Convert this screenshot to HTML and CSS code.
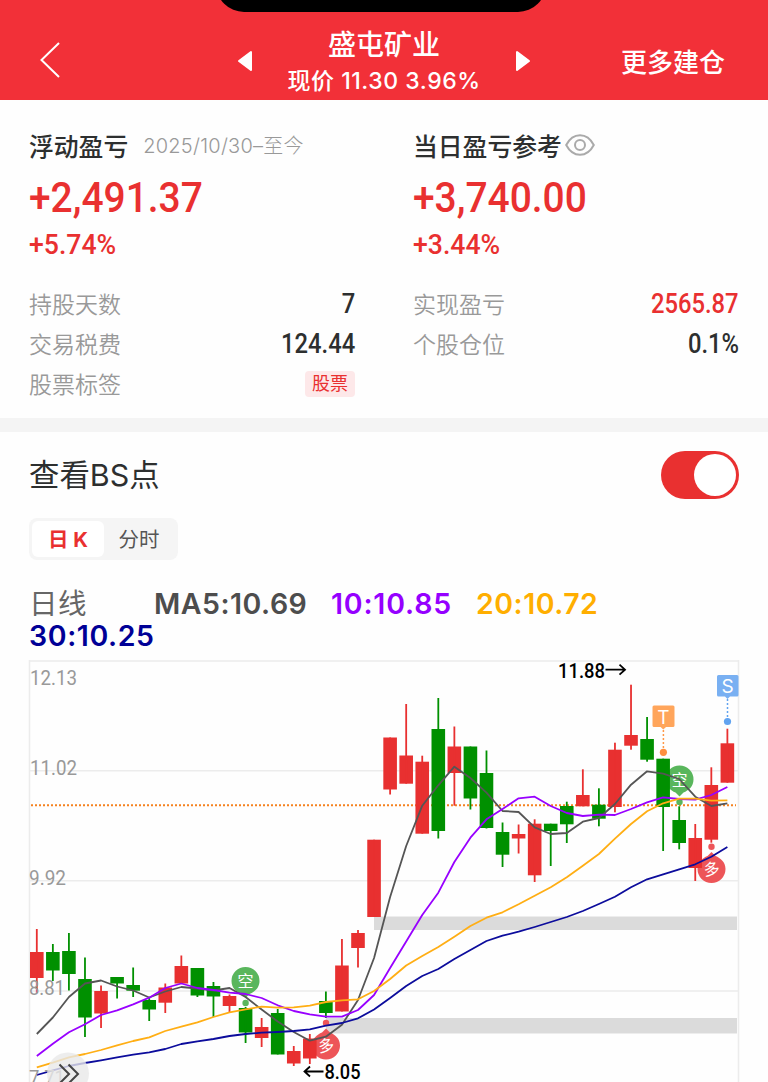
FILE: index.html
```html
<!DOCTYPE html>
<html lang="zh-CN">
<head>
    <meta charset="UTF-8">
    <meta name="viewport" content="width=device-width, initial-scale=1.0">
    <title>盛屯矿业</title>
    <link rel="stylesheet" href="styles.css">
</head>
<body>
<header class="header">
    <div class="notch"></div>
    <svg class="back" width="24" height="38" viewBox="0 0 24 38"><path d="M21 2 3.500 19 21 36"/></svg>
    <div class="stock">
        <svg class="arrow" width="16" height="22" viewBox="0 0 16 22"><path d="M14 3v18L2 12z"/></svg>
        <div class="stock-info">
            <div class="stock-name">盛屯矿业</div>
            <div class="stock-price">现价 11.30 3.96%</div>
        </div>
        <svg class="arrow" width="16" height="22" viewBox="0 0 16 22"><path d="M2 3v18l12-9z"/></svg>
    </div>
    <div class="more">更多建仓</div>
</header>

<section class="summary">
    <div class="column">
        <div class="title">浮动盈亏<span class="date">2025/10/30–至今</span></div>
        <div class="amount"><span>+2,491.37</span></div>
        <div class="percent"><span>+5.74%</span></div>
        <div class="row first"><span>持股天数</span><b>7</b></div>
        <div class="row"><span>交易税费</span><b>124.44</b></div>
        <div class="row"><span>股票标签</span><em class="tag">股票</em></div>
    </div>
    <div class="column">
        <div class="title">当日盈亏参考<svg class="eye" width="30" height="22" viewBox="0 0 30 22"><path d="M1.200 11C8-2 22-2 28.800 11 22 24 8 24 1.200 11z"/><circle cx="15" cy="11" r="5"/></svg></div>
        <div class="amount"><span>+3,740.00</span></div>
        <div class="percent"><span>+3.44%</span></div>
        <div class="row first"><span>实现盈亏</span><b class="red">2565.87</b></div>
        <div class="row"><span>个股仓位</span><b>0.1%</b></div>
    </div>
</section>

<section class="points">
    <div class="points-head">
        <h2>查看BS点</h2>
        <div class="switch"></div>
    </div>
    <div class="tabs">
        <div class="tab active">日 K</div>
        <div class="tab">分时</div>
    </div>
    <div class="legend">
        <span class="period">日线</span>
        <span class="ma5">MA5:10.69</span>
        <span class="ma10">10:10.85</span>
        <span class="ma20">20:10.72</span>
        <span class="ma30">30:10.25</span>
    </div>
</section>

<svg class="chart" width="768" height="428" viewBox="0 654 768 428">
    <path class="grid" d="M29 661H739M29 770.7H739M29 880.7H739M29 991H739M29.5 660V1082M738.5 660V1082"/>
    <path class="gap" d="M374 916.5H737V930H374zM326 1018H737V1033.5H326z"/>
    <path class="price-line" d="M31 805.3H736"/>

    <g class="short">
        <path d="M231.5 981a14 14 0 1 1 28 0c0 7-5 11-10 13l-4 4-4-4c-5-2-10-6-10-13z"/>
        <circle cx="245.6" cy="1003" r="3.2"/>
        <text x="245.6" y="987">空</text>
        <path d="M665.5 779.5a14 14 0 1 1 28 0c0 7-5 11-10 13l-4 4-4-4c-5-2-10-6-10-13z"/>
        <circle cx="679.5" cy="802" r="3.2"/>
        <text x="679.5" y="785.5">空</text>
    </g>
    <g class="long">
        <path d="M312 1045.5a14 14 0 1 0 28 0c0-7-5-11-10-13l-4-4-4 4c-5 2-10 6-10 13z"/>
        <circle cx="326" cy="1023" r="3.2"/>
        <text x="326" y="1051.5" transform="rotate(-8 326 1045)">多</text>
        <path d="M697.5 869a14 14 0 1 0 28 0c0-7-5-11-10-13l-4-4-4 4c-5 2-10 6-10 13z"/>
        <circle cx="711.5" cy="846.7" r="3.2"/>
        <text x="711.5" y="875" transform="rotate(-8 711.5 869)">多</text>
    </g>

    <g id="candles"></g>
    <g id="lines"></g>

    <g class="badge t">
        <path d="M654 705.5h19a1.500 1.500 0 0 1 1.500 1.500v18.500a1.500 1.500 0 0 1-1.500 1.500h-7l-2.700 2.500-2.700-2.500h-6.600a1.500 1.500 0 0 1-1.500-1.500V707a1.500 1.500 0 0 1 1.500-1.500z"/>
        <path class="stem" d="M663.4 730V749"/>
        <circle cx="663.4" cy="752.3" r="3.6"/>
        <text x="663.4" y="723.5">T</text>
    </g>
    <g class="badge s">
        <path d="M718.5 675h18.500a1.500 1.500 0 0 1 1.500 1.500v18.500a1.500 1.500 0 0 1-1.500 1.500h-7l-2.500 2.500-2.500-2.500h-6.500a1.500 1.500 0 0 1-1.500-1.500v-18.500a1.500 1.500 0 0 1 1.500-1.500z"/>
        <path class="stem" d="M727.5 699V718"/>
        <circle cx="727.5" cy="721.5" r="3.6"/>
        <text x="727.5" y="693">S</text>
    </g>

    <g class="axis">
        <text x="30" y="685" textLength="47" lengthAdjust="spacingAndGlyphs">12.13</text>
        <text x="30" y="775" textLength="47" lengthAdjust="spacingAndGlyphs">11.02</text>
        <text x="29" y="885" textLength="37" lengthAdjust="spacingAndGlyphs">9.92</text>
        <text x="29" y="995" textLength="36" lengthAdjust="spacingAndGlyphs">8.81</text>
        <text x="29" y="1085" textLength="36" lengthAdjust="spacingAndGlyphs">7.71</text>
    </g>
    <g class="extreme">
        <text x="558" y="677.5" textLength="47" lengthAdjust="spacingAndGlyphs">11.88</text>
        <path d="M605.5 669.7H625M619.5 664.7l5.500 5-5.500 5"/>
        <text x="324.5" y="1078.5" textLength="36" lengthAdjust="spacingAndGlyphs">8.05</text>
        <path d="M323.5 1071.5H305M310 1066.5l-5.500 5 5.500 5"/>
    </g>

    <circle class="expand" cx="68" cy="1073.5" r="21"/>
    <path class="expand-icon" d="M59.5 1064.5l9.500 9.500-9.500 9.500M68.5 1064.5l9.500 9.500-9.500 9.500"/>
</svg>
<script src="chart.js"></script>
</body>
</html>
```

FILE: styles.css
```css
* {
    box-sizing: border-box;
}

body {
    margin: 0;
    height: 1082px;
    overflow: hidden;
    background: #fefefe;
    color: #2d2f2f;
    font-family: Inter, "Noto Sans CJK SC", sans-serif;
}

.header {
    position: relative;
    display: grid;
    grid-template-columns: 200px 368px 200px;
    align-items: center;
    height: 100px;
    padding-top: 20px;
    background: #f23038;
    color: #fff;
}

.notch {
    position: absolute;
    top: -20px;
    left: 216px;
    width: 330px;
    height: 32px;
    border-radius: 0 0 28px 28px;
    background: #000;
}

.back {
    margin-left: 38px;
    fill: none;
    stroke: #fff;
    stroke-width: 2;
}

.stock {
    display: flex;
    align-items: center;
    justify-content: space-between;
    padding: 0 37px;
}

.arrow {
    fill: #fff;
    stroke: #fff;
    stroke-width: 2;
    stroke-linejoin: round;
}

.stock-info {
    padding-top: 5px;
    text-align: center;
    white-space: nowrap;
}

.stock-name {
    font-size: 28px;
    font-weight: 500;
    line-height: 38px;
}

.stock-price {
    font-size: 23px;
    font-weight: 500;
    letter-spacing: 0.55px;
    line-height: 35px;
}

.more {
    padding: 5px 0 0 53px;
    font-size: 26px;
    font-weight: 500;
    line-height: 40px;
}

.summary {
    display: flex;
    gap: 58px;
    height: 332px;
    padding: 27px 29px 0;
    border-bottom: 14px solid #f4f4f4;
}

.column {
    flex: 1;
}

.title {
    display: flex;
    align-items: center;
    height: 36px;
    font-size: 24.8px;
    font-weight: 500;
}

.date {
    margin: -2px 0 0 15px;
    color: #999;
    font-size: 20px;
    font-weight: 300;
    letter-spacing: 0.25px;
}

.eye {
    margin-left: 3px;
    fill: none;
    stroke: #aaa;
    stroke-width: 2;
}

.amount,
.percent {
    color: #e93030;
    font-family: Roboto, sans-serif;
    font-weight: 500;
}

.amount {
    height: 68px;
    font-size: 43px;
    line-height: 68px;
}

.percent {
    height: 25px;
    font-size: 28px;
    line-height: 27px;
}

.amount span,
.percent span {
    display: inline-block;
    transform: scaleX(0.905);
    transform-origin: left;
}

.percent span {
    transform: scaleX(0.95);
}

.row {
    display: flex;
    align-items: center;
    justify-content: space-between;
    height: 40px;
    color: #999;
    font-size: 23px;
    font-weight: 350;
}

.row.first {
    margin-top: 27px;
}

.row b {
    padding-top: 2px;
    color: #2d2f2f;
    font-family: Roboto, sans-serif;
    font-size: 27px;
    font-weight: 500;
    transform: scaleX(0.88);
    transform-origin: right;
}

.row b.red {
    color: #e93030;
}

.tag {
    width: 50px;
    height: 26px;
    margin-top: 2px;
    border-radius: 4px;
    background: #fde8e9;
    color: #e93030;
    font-size: 18px;
    font-style: normal;
    font-weight: 400;
    line-height: 26px;
    text-align: center;
}

.points {
    height: 222px;
    padding: 17px 29px 0;
}

.points-head {
    display: flex;
    align-items: center;
    justify-content: space-between;
    height: 52px;
}

h2 {
    margin: -4px 0 0;
    font-size: 30.4px;
    font-weight: 400;
}

.switch {
    width: 78px;
    height: 48px;
    padding: 3px;
    border-radius: 24px;
    background: #e93030;
}

.switch::after {
    content: "";
    display: block;
    width: 42px;
    height: 42px;
    margin-left: auto;
    border-radius: 50%;
    background: #fff;
}

.tabs {
    display: flex;
    width: 149px;
    height: 42px;
    margin-top: 17px;
    padding: 3px;
    border-radius: 8px;
    background: #f5f5f5;
}

.tab {
    width: 70px;
    border-radius: 6px;
    color: #555;
    font-size: 20.5px;
    line-height: 37px;
    text-align: center;
}

.tab.active {
    width: 72px;
    background: #fff;
    color: #e93030;
    font-weight: 700;
}

.legend {
    display: flex;
    flex-wrap: wrap;
    align-items: center;
    margin-top: 28px;
    font-size: 28.5px;
    font-weight: 600;
    letter-spacing: 0.5px;
    line-height: 32px;
}

.period {
    width: 125px;
    color: #666;
    font-weight: 400;
}

.ma5 {
    width: 177px;
    color: #4d4d4d;
}

.ma10 {
    width: 145px;
    color: #9500ff;
    letter-spacing: 0.8px;
}

.ma20 {
    width: 200px;
    color: #ffae00;
}

.ma30 {
    color: #000096;
    letter-spacing: 0.6px;
}

.chart {
    display: block;
}

.grid {
    fill: none;
    stroke: #ececec;
    stroke-width: 1.5;
}

.gap {
    fill: #dbdbdb;
}

.price-line {
    fill: none;
    stroke: #f58220;
    stroke-width: 2;
    stroke-dasharray: 2 2;
}

.up {
    fill: #e83030;
    stroke: none;
}

.down {
    fill: #009000;
    stroke: none;
}

.line {
    fill: none;
    stroke-width: 1.8;
    stroke-linejoin: round;
}

.line-5 {
    stroke: #555;
}

.line-10 {
    stroke: #9800ff;
}

.line-20 {
    stroke: #ffae14;
}

.line-30 {
    stroke: #0c0c9c;
}

.short {
    fill: #59b65c;
}

.long {
    fill: #ed5558;
}

.short text,
.long text {
    fill: #fff;
    font-size: 16px;
    text-anchor: middle;
}

.badge text {
    fill: #fff;
    font-size: 19px;
    text-anchor: middle;
}

.badge.t {
    fill: #ffa55b;
    stroke: none;
}

.badge.s {
    fill: #79b0f2;
}

.stem {
    fill: none;
    stroke-width: 1.5;
    stroke-dasharray: 2 2;
}

.t .stem {
    stroke: #ff9847;
}

.s .stem {
    stroke: #61a3f0;
}

.t circle {
    fill: #ff9040;
}

.s circle {
    fill: #61a3f0;
}

.axis text,
.extreme text {
    font-family: Roboto, sans-serif;
    font-size: 20.5px;
}

.axis {
    fill: #999;
}

.extreme text {
    fill: #000;
    font-weight: 500;
}

.extreme path {
    fill: none;
    stroke: #000;
    stroke-width: 1.8;
}

.expand {
    fill: #e8e8e8;
    opacity: 0.8;
}

.expand-icon {
    fill: none;
    stroke: #444;
    stroke-width: 2;
}
```

FILE: chart.js
```js
const START = 36.8;
const STEP = 16.06;
const WIDTH = 13.6;

// [direction, body top, body bottom, wick top, wick bottom]
const candles = [
    ['up', 952, 978, 929, 993],
    ['down', 952, 970.5, 944, 981],
    ['down', 951, 974, 933, 990.5],
    ['down', 979, 1017.5, 957.5, 1037],
    ['up', 991, 1013.5, 985.5, 1028],
    ['down', 977, 983.5, 977, 998.5],
    ['down', 985, 990.7, 967.5, 997],
    ['down', 1000, 1009.5, 997, 1021],
    ['up', 987.5, 1002.7, 983.5, 1013],
    ['up', 966, 983.5, 955.5, 983.5],
    ['down', 968, 995.5, 968, 997],
    ['down', 986, 996.5, 982, 1017],
    ['up', 996, 1006, 994.5, 1012.5],
    ['down', 1008, 1032.5, 1007, 1043],
    ['up', 1027, 1038, 1018, 1047],
    ['down', 1013, 1054.5, 1009, 1054.5],
    ['up', 1051, 1063.5, 1046, 1066],
    ['up', 1038.5, 1058.5, 1034, 1064],
    ['down', 1001, 1013, 991.5, 1018],
    ['up', 965.5, 1011.5, 939, 1011.5],
    ['up', 933, 948, 930, 967.5],
    ['up', 839.7, 917, 839.7, 917],
    ['up', 737.5, 789.5, 737.5, 794.5],
    ['up', 755.5, 783.7, 704, 783.7],
    ['up', 761.7, 833.7, 755.7, 833.7],
    ['down', 729, 831, 698, 838.5],
    ['up', 746.5, 773, 726.5, 805.7],
    ['down', 746.5, 798.5, 746.5, 809.5],
    ['down', 773, 828, 750.5, 828.5],
    ['down', 832, 854.7, 822.5, 867],
    ['up', 834, 838.5, 824.5, 853.5],
    ['up', 823.7, 875.3, 819.3, 882],
    ['down', 823.7, 831, 823.7, 866],
    ['down', 806, 824.3, 801.7, 843],
    ['up', 795, 806.3, 769.3, 806.3],
    ['down', 804.7, 818.7, 788.3, 826.3],
    ['up', 749.7, 807, 742.7, 812.3],
    ['up', 735, 745.7, 684.7, 749.7],
    ['down', 739, 759.7, 717, 761.7],
    ['down', 758.7, 807, 758.7, 851],
    ['down', 820, 843, 806.3, 849.3],
    ['up', 838, 868, 824, 881],
    ['up', 785, 839.7, 767.3, 842.7],
    ['up', 743.3, 782.7, 728.7, 782.7]
];

const averages = {
    5: [1034, 1017.5, 997, 983.5, 980.5, 986.5, 990.5, 997.5, 991.5, 987, 988.5, 990.5, 988, 997, 1009.5,
        1021.5, 1032, 1040.7, 1036.7, 1024.7, 1000, 958, 897, 846, 805.7, 785.3, 766.7, 778, 792.7, 811,
        812, 827.3, 834, 833, 821.7, 818, 804, 784.7, 771.3, 773.7, 779, 796.7, 806, 803.3],
    10: [1056, 1043.7, 1032.3, 1024.3, 1015, 1010.3, 1004.3, 997.7, 988, 983.5, 988, 990, 992.7, 994, 998,
        1005.3, 1011, 1014.3, 1016.7, 1016.7, 1010, 995, 968, 941.5, 915, 892.7, 862, 837.7, 819.3, 809,
        798.3, 796.7, 806, 813, 816, 814.7, 815, 809, 802.3, 797.3, 799, 799.7, 795, 787],
    20: [1067.3, 1062.7, 1057.3, 1054, 1050, 1045.3, 1041, 1037.3, 1031, 1026.7, 1022.3, 1017, 1012.3, 1009.3, 1006.7,
        1007.7, 1007.3, 1005.7, 1002, 1000.3, 999.3, 991, 979, 965.5, 956, 947, 936.7, 926, 917.7, 912.3,
        904.3, 895.7, 887.3, 877.3, 865.7, 854, 838.7, 824, 811.3, 803.3, 798.7, 798.7, 800.7, 800.3],
    30: [1075, 1070.3, 1066, 1063, 1060.3, 1057.3, 1054.7, 1052.3, 1049, 1044, 1041.3, 1039, 1036, 1034, 1032.7,
        1032, 1031, 1029.3, 1025.7, 1023, 1018.3, 1009.5, 998, 986, 976, 969, 959, 950, 941, 935.7,
        931.7, 927, 922, 917, 911, 904, 896.7, 887.3, 879.3, 874.3, 869.3, 864.3, 856.7, 847]
};

const x = i => START + i * STEP;

document.getElementById('candles').innerHTML = candles.map(([dir, top, bottom, high, low], i) => `
    <rect class="${dir}" x="${x(i) - WIDTH / 2}" y="${top}" width="${WIDTH}" height="${bottom - top}"/>
    <rect class="${dir}" x="${x(i) - 0.9}" y="${high}" width="1.8" height="${low - high}"/>`).join('');

document.getElementById('lines').innerHTML = Object.keys(averages).map(key => {
    const points = averages[key].map((y, i) => `${x(i)},${y}`).join(' ');
    return `<polyline class="line line-${key}" points="${points}"/>`;
}).join('');
```
